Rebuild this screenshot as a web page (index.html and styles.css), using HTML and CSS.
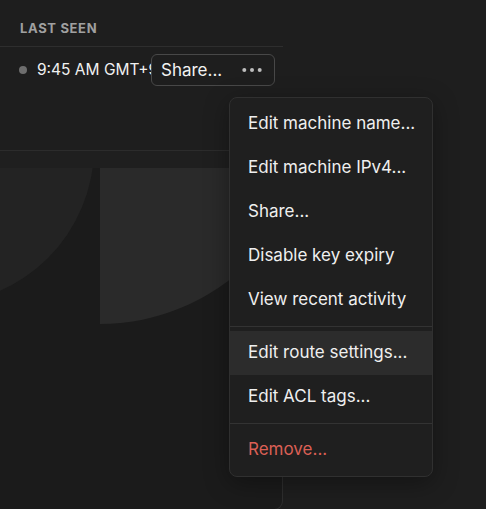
FILE: index.html
```html
<!DOCTYPE html>
<html>
<head>
<meta charset="utf-8">
<link rel="stylesheet" href="styles.css">
</head>
<body>
<div class="page">
  <div class="table">
    <div class="thead"><span class="th">Last seen</span></div>
    <div class="row">
      <span class="dot"></span>
      <span class="time">9:45 AM GMT+9</span>
    </div>
    <div class="panel">
      <div class="band"></div>
      <svg class="art" width="282" height="340" viewBox="0 0 282 340">
        <circle cx="-63" cy="-21" r="157" fill="#232323"/>
        <path d="M100 -56 H312 A212 212 0 0 1 100 156 Z" fill="#2a2a2a"/>
      </svg>
    </div>
  </div>

  <div class="share-btn">
    <span class="share-label">Share...</span>
    <svg class="more" width="20" height="4" viewBox="0 0 20 4">
      <circle cx="2.3" cy="2" r="2" fill="#bdbdbd"/>
      <circle cx="10" cy="2" r="2" fill="#bdbdbd"/>
      <circle cx="17.7" cy="2" r="2" fill="#bdbdbd"/>
    </svg>
  </div>

  <div class="menu">
    <div class="group">
      <div class="item">Edit machine name...</div>
      <div class="item">Edit machine IPv4...</div>
      <div class="item">Share...</div>
      <div class="item">Disable key expiry</div>
      <div class="item">View recent activity</div>
    </div>
    <div class="sep"></div>
    <div class="group">
      <div class="item active">Edit route settings...</div>
      <div class="item">Edit ACL tags...</div>
    </div>
    <div class="sep"></div>
    <div class="group">
      <div class="item danger">Remove...</div>
    </div>
  </div>
</div>
</body>
</html>
```

FILE: styles.css
```css
* { box-sizing: border-box; }
html, body {
  margin: 0;
  padding: 0;
  background: #1e1e1e;
  font-family: Inter, "Liberation Sans", sans-serif;
  color: #e8e8e8;
}
.page {
  position: relative;
  width: 486px;
  height: 509px;
  overflow: hidden;
}
.table {
  width: 283px;
  display: flex;
  flex-direction: column;
}
.thead {
  height: 47px;
  padding: 17px 0 0 20px;
  border-bottom: 1px solid #2e2e2e;
}
.th {
  font-size: 13px;
  font-weight: 700;
  letter-spacing: 0.05em;
  text-transform: uppercase;
  color: #a0a0a0;
}
.row {
  height: 103px;
  display: flex;
  align-items: flex-start;
  padding: 14px 0 0 19px;
  gap: 10px;
  white-space: nowrap;
}
.dot {
  width: 8px;
  height: 8px;
  border-radius: 50%;
  background: #6e6e6e;
  margin-top: 5px;
}
.time {
  font-size: 15.5px;
  line-height: 18px;
  color: #f0f0f0;
}
.panel {
  height: 360px;
  border-top: 1px solid #2c2c2c;
  border-right: 1px solid #2e2e2e;
  border-bottom: 1px solid #2e2e2e;
  border-bottom-right-radius: 9px;
  background: #1b1b1b;
  overflow: hidden;
  display: flex;
  flex-direction: column;
}
.band {
  height: 17px;
  background: #1f1f1f;
  flex: none;
}
.art { display: block; flex: none; }

.share-btn {
  position: absolute;
  left: 151px;
  top: 54px;
  width: 124px;
  height: 32px;
  border: 1px solid #484848;
  border-radius: 6px;
  background: #1e1e1e;
  display: flex;
  align-items: center;
  justify-content: space-between;
  padding: 0 12px 0 9px;
}
.share-label {
  font-size: 17px;
  color: #f2f2f2;
}
.more { display: block; }

.menu {
  position: absolute;
  left: 229px;
  top: 97px;
  width: 204px;
  height: 380px;
  background: #1f1f1f;
  border: 1px solid #303030;
  border-radius: 8px;
  box-shadow: 0 6px 24px rgba(0,0,0,0.35);
  display: flex;
  flex-direction: column;
}
.group {
  padding: 4px 0;
  display: flex;
  flex-direction: column;
}
.item {
  height: 44px;
  display: flex;
  align-items: center;
  padding-left: 18px;
  padding-bottom: 2px;
  font-size: 17px;
  color: #efefef;
  white-space: nowrap;
}
.item.active { background: #2c2c2c; }
.item.danger { color: #db5f55; }
.sep {
  height: 1px;
  background: #333333;
}
```
